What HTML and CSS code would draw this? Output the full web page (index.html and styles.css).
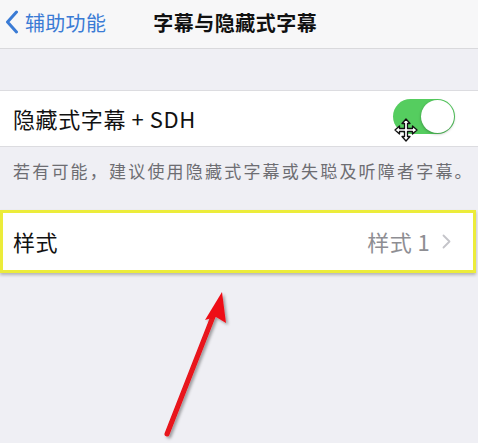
FILE: index.html
```html
<!DOCTYPE html>
<html lang="zh-CN">
<head>
<meta charset="utf-8">
<link rel="stylesheet" href="styles.css">
</head>
<body>
<div class="screen">
  <header class="nav">
    <a class="back">
      <svg class="back-icon" width="14" height="24" viewBox="0 0 14 24"><polyline points="11.5,2 2.5,12 11.5,22" fill="none" stroke="#3a7bd5" stroke-width="3" stroke-linecap="round" stroke-linejoin="round"/></svg>
      <span class="back-text">辅助功能</span>
    </a>
    <h1 class="title">字幕与隐藏式字幕</h1>
  </header>

  <div class="group-gap"></div>

  <div class="cell cell-toggle">
    <span class="cell-label">隐藏式字幕 + SDH</span>
    <span class="switch"><span class="knob"></span></span>
  </div>
  <p class="footer-note">若有可能，建议使用隐藏式字幕或失聪及听障者字幕。</p>

  <div class="highlight">
    <div class="cell cell-link">
      <span class="cell-label">样式</span>
      <span class="cell-value">样式 1</span>
      <svg class="chevron" width="9" height="15" viewBox="0 0 9 15"><polyline points="1.5,1.5 7.5,7.5 1.5,13.5" fill="none" stroke="#c4c4c9" stroke-width="1.8" stroke-linecap="round" stroke-linejoin="round"/></svg>
    </div>
  </div>

  <svg class="cursor" width="24" height="24" viewBox="0 0 24 24">
    <path d="M12 1 L16 5.5 L13.5 5.5 L13.5 10.5 L18.5 10.5 L18.5 8 L23 12 L18.5 16 L18.5 13.5 L13.5 13.5 L13.5 18.5 L16 18.5 L12 23 L8 18.5 L10.5 18.5 L10.5 13.5 L5.5 13.5 L5.5 16 L1 12 L5.5 8 L5.5 10.5 L10.5 10.5 L10.5 5.5 L8 5.5 Z" fill="#fff" stroke="#111" stroke-width="1.3" stroke-linejoin="round"/>
  </svg>

  <svg class="arrow" width="478" height="443" viewBox="0 0 478 443">
    <defs>
      <filter id="sh" x="-20%" y="-20%" width="140%" height="140%">
        <feDropShadow dx="2" dy="2" stdDeviation="1.5" flood-color="#000" flood-opacity="0.35"/>
      </filter>
    </defs>
    <g filter="url(#sh)">
      <line x1="167" y1="434" x2="214" y2="314" stroke="#e8121a" stroke-width="5" stroke-linecap="round"/>
      <polygon points="222,292 226,323 216,317 205,320" fill="#ee1018"/>
    </g>
  </svg>
</div>
</body>
</html>
```
FILE: styles.css
```css
* { box-sizing: border-box; }
html, body { margin: 0; padding: 0; }
body {
  width: 478px;
  height: 443px;
  overflow: hidden;
  background: #efeff4;
  font-family: "Noto Sans CJK SC", "Noto Sans", sans-serif;
}
.screen {
  position: relative;
  width: 478px;
  height: 443px;
}
.nav {
  height: 49px;
  background: #f7f7f8;
  border-bottom: 1px solid #d9d9dc;
  display: flex;
  align-items: center;
}
.back {
  display: flex;
  align-items: center;
  padding-left: 5px;
  color: #3a7bd5;
  margin-top: -4px;
}
.back-icon { display: block; }
.back-text {
  font-size: 20px;
  margin-left: 6px;
  letter-spacing: 0.3px;
}
.title {
  margin: -4px 0 0 47px;
  font-size: 20px;
  font-weight: 700;
  color: #111;
  letter-spacing: 0.5px;
}
.group-gap { height: 41px; }
.cell {
  background: #fff;
  display: flex;
  align-items: center;
}
.cell-toggle {
  height: 57px;
  border-top: 1px solid #dcdce0;
  border-bottom: 1px solid #dcdce0;
  padding: 0 23px 0 13px;
}
.cell-label {
  font-size: 22px;
  color: #111;
  flex: 1;
  letter-spacing: 0.6px;
  margin-top: -2px;
}
.switch {
  width: 62px;
  height: 35px;
  border-radius: 18px;
  background: #55cd5f;
  display: flex;
  justify-content: flex-end;
  align-items: center;
  padding: 1px;
  margin-top: -4px;
}
.knob {
  width: 33px;
  height: 33px;
  border-radius: 50%;
  background: #fff;
  box-shadow: 0 1px 3px rgba(0,0,0,0.3);
}
.footer-note {
  margin: 0;
  padding: 11px 0 0 13px;
  height: 63px;
  font-size: 17px;
  color: #6d6d72;
  letter-spacing: 2.2px;
  white-space: nowrap;
}
.highlight {
  width: 476px;
  border: 3px solid #ecec3a;
  box-shadow: 0 2px 3px rgba(0,0,0,0.25), inset 0 0 2px rgba(160,160,0,0.5);
}
.cell-link {
  height: 57px;
  padding: 0 22px 0 10px;
}
.cell-value {
  font-size: 22px;
  color: #8e8e93;
  margin-right: 12px;
  letter-spacing: 0.4px;
  margin-top: -2px;
}
.chevron { display: block; }
.cursor {
  position: absolute;
  left: 394px;
  top: 118px;
}
.arrow {
  position: absolute;
  left: 0;
  top: 0;
  pointer-events: none;
}
```
